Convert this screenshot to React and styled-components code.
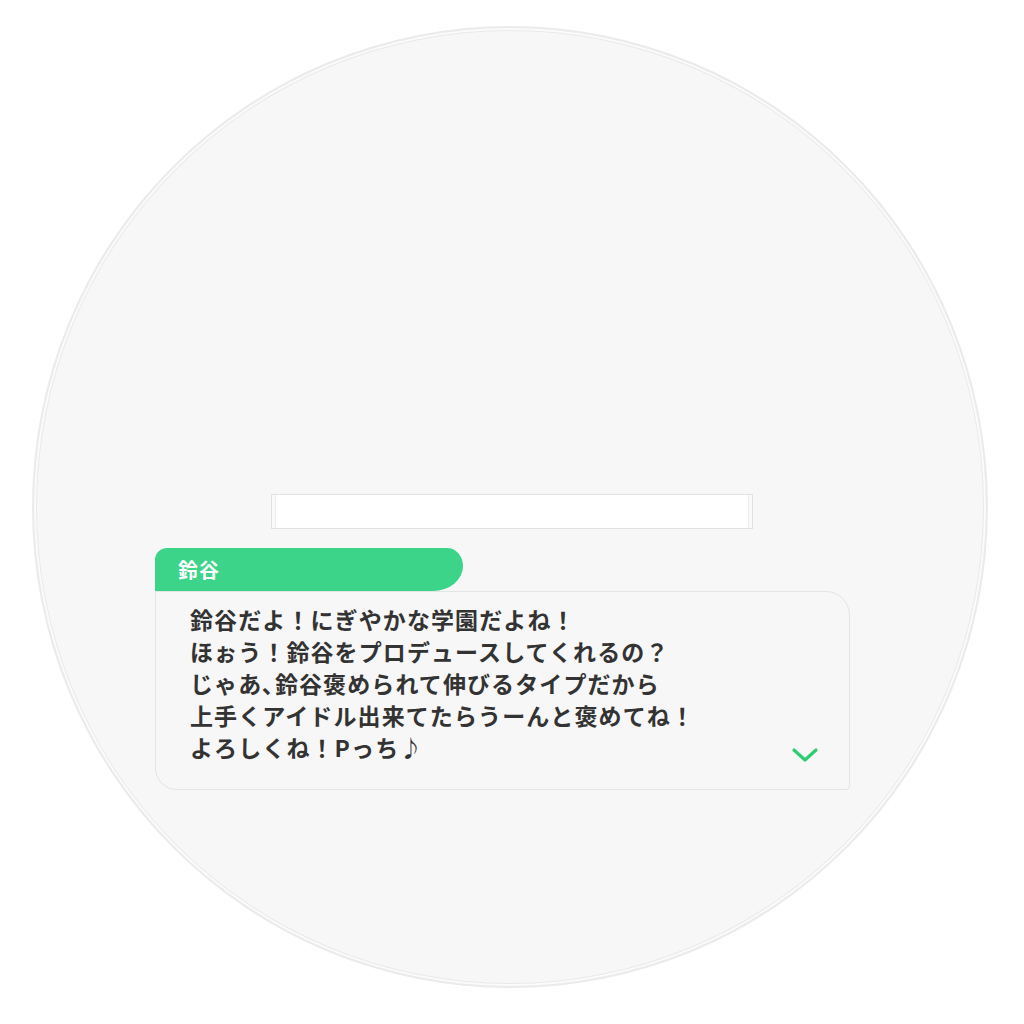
import React from 'react';
import styled, { createGlobalStyle } from 'styled-components';

const GlobalStyle = createGlobalStyle`
  html, body {
    margin: 0;
    padding: 0;
    background: #ffffff;
  }
  body {
    font-family: "Noto Sans CJK JP", "Noto Sans", sans-serif;
  }
`;

const Page = styled.div`
  width: 1024px;
  height: 1024px;
  padding: 26px 0 0 32px;
  box-sizing: border-box;
  background: #ffffff;
`;

const Watch = styled.div`
  width: 956px;
  height: 962px;
  border-radius: 50%;
  box-sizing: border-box;
  background: #f7f7f7;
  border: 2px solid #ebebeb;
  box-shadow: inset 0 0 0 2px #fbfbfb, inset 0 0 0 3px #e9e9e9;
  display: flex;
  flex-direction: column;
  padding-top: 466px;
`;

const InputBar = styled.div`
  width: 482px;
  height: 35px;
  margin-left: 237px;
  box-sizing: border-box;
  background: #ffffff;
  border: 1px solid #e2e2e2;
  box-shadow: inset 3px 0 0 #fafafa, inset 4px 0 0 #ececec, inset -3px 0 0 #fafafa, inset -4px 0 0 #ececec;
`;

const Dialog = styled.div`
  margin: 19px 0 0 121px;
  display: flex;
  flex-direction: column;
`;

const NameTab = styled.div`
  width: 308px;
  height: 43px;
  box-sizing: border-box;
  padding-left: 23px;
  display: flex;
  align-items: center;
  background: #3bd488;
  color: #ffffff;
  font-size: 20px;
  font-weight: 700;
  letter-spacing: 1px;
  border-radius: 12px 16px 30px 0 / 12px 18px 25px 0;
`;

const MessageBox = styled.div`
  width: 695px;
  height: 199px;
  box-sizing: border-box;
  background: #f7f7f7;
  border: 1px solid #e4e4e4;
  border-radius: 0 24px 4px 22px;
  padding: 11px 30px 0 34px;
  display: flex;
`;

const Message = styled.div`
  flex: 1;
  color: #333333;
  font-size: 23px;
  font-weight: 700;
  line-height: 32px;
  letter-spacing: 1.1px;
  white-space: pre-line;
`;

const NextMark = styled.svg`
  align-self: flex-end;
  margin-bottom: 25px;
  flex-shrink: 0;
`;

const lines = [
  '鈴谷だよ！にぎやかな学園だよね！',
  'ほぉう！鈴谷をプロデュースしてくれるの？',
  'じゃあ､鈴谷褒められて伸びるタイプだから',
  '上手くアイドル出来てたらうーんと褒めてね！',
  'よろしくね！Pっち♪',
];

export default function App() {
  return (
    <>
      <GlobalStyle />
      <Page>
        <Watch>
          <InputBar />
          <Dialog>
            <NameTab>鈴谷</NameTab>
            <MessageBox>
              <Message>{lines.join('\n')}</Message>
              <NextMark width="28" height="18" viewBox="0 0 28 18">
                <path d="M3 4 L14 14 L25 4" fill="none" stroke="#2fcc74" strokeWidth="3.2" strokeLinecap="round" strokeLinejoin="round" />
              </NextMark>
            </MessageBox>
          </Dialog>
        </Watch>
      </Page>
    </>
  );
}
